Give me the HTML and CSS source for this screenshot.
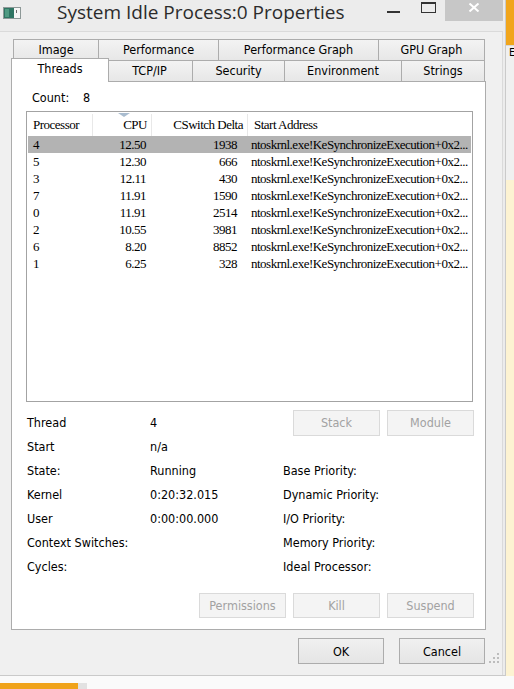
FILE: index.html
```html
<!DOCTYPE html>
<html lang="en">
<head>
    <meta charset="UTF-8">
    <meta name="viewport" content="width=device-width, initial-scale=1.0">
    <title>System Idle Process:0 Properties</title>
    <link rel="stylesheet" href="styles.css">
</head>
<body>
    <div class="screen">
        <div class="desk">
            <div class="window">
                <div class="titlebar">
                    <svg class="app-icon" width="18" height="12" viewBox="0 0 18 12">
                        <rect x="0.5" y="0.5" width="17" height="11" fill="#f6f6f6" stroke="#8d9897"/>
                        <rect x="1" y="1" width="10" height="10" fill="#2f7563"/>
                        <rect x="2" y="2" width="4" height="8" fill="#4f9a82"/>
                        <rect x="13" y="3" width="1" height="3" fill="#6b6b6b"/>
                    </svg>
                    <span class="title">System Idle Process:0 Properties</span>
                    <span class="cap-min"></span>
                    <span class="cap-max"></span>
                    <span class="cap-close">
                        <svg width="12" height="9" viewBox="0 0 12 9">
                            <path d="M1.5 0.5 L10.5 8.5 M10.5 0.5 L1.5 8.5" stroke="#fff" stroke-width="2"/>
                        </svg>
                    </span>
                </div>

                <div class="client">
                    <div class="tabs tabs-back">
                        <div class="tab">Image</div>
                        <div class="tab">Performance</div>
                        <div class="tab">Performance Graph</div>
                        <div class="tab">GPU Graph</div>
                    </div>
                    <div class="tabs tabs-front">
                        <div class="tab active">Threads</div>
                        <div class="tab">TCP/IP</div>
                        <div class="tab">Security</div>
                        <div class="tab">Environment</div>
                        <div class="tab">Strings</div>
                    </div>

                    <div class="panel">
                        <div class="count"><span class="count-label">Count:</span>8</div>

                        <div class="list">
                            <div class="list-head">
                                <div class="cell">Processor</div>
                                <div class="cell num sorted">CPU<span class="sort-arrow"></span></div>
                                <div class="cell num">CSwitch Delta</div>
                                <div class="cell addr">Start Address</div>
                            </div>
                            <div class="row selected">
                                <div class="cell">4</div><div class="cell num">12.50</div><div class="cell num wide">1938</div><div class="cell addr">ntoskrnl.exe!KeSynchronizeExecution+0x2...</div>
                            </div>
                            <div class="row">
                                <div class="cell">5</div><div class="cell num">12.30</div><div class="cell num wide">666</div><div class="cell addr">ntoskrnl.exe!KeSynchronizeExecution+0x2...</div>
                            </div>
                            <div class="row">
                                <div class="cell">3</div><div class="cell num">12.11</div><div class="cell num wide">430</div><div class="cell addr">ntoskrnl.exe!KeSynchronizeExecution+0x2...</div>
                            </div>
                            <div class="row">
                                <div class="cell">7</div><div class="cell num">11.91</div><div class="cell num wide">1590</div><div class="cell addr">ntoskrnl.exe!KeSynchronizeExecution+0x2...</div>
                            </div>
                            <div class="row">
                                <div class="cell">0</div><div class="cell num">11.91</div><div class="cell num wide">2514</div><div class="cell addr">ntoskrnl.exe!KeSynchronizeExecution+0x2...</div>
                            </div>
                            <div class="row">
                                <div class="cell">2</div><div class="cell num">10.55</div><div class="cell num wide">3981</div><div class="cell addr">ntoskrnl.exe!KeSynchronizeExecution+0x2...</div>
                            </div>
                            <div class="row">
                                <div class="cell">6</div><div class="cell num">8.20</div><div class="cell num wide">8852</div><div class="cell addr">ntoskrnl.exe!KeSynchronizeExecution+0x2...</div>
                            </div>
                            <div class="row">
                                <div class="cell">1</div><div class="cell num">6.25</div><div class="cell num wide">328</div><div class="cell addr">ntoskrnl.exe!KeSynchronizeExecution+0x2...</div>
                            </div>
                        </div>

                        <div class="details">
                            <div>Thread</div><div>4</div>
                            <div class="thread-buttons">
                                <button class="btn" disabled>Stack</button>
                                <button class="btn" disabled>Module</button>
                            </div>
                            <div>Start</div><div>n/a</div><div></div>
                            <div>State:</div><div>Running</div><div>Base Priority:</div>
                            <div>Kernel</div><div>0:20:32.015</div><div>Dynamic Priority:</div>
                            <div>User</div><div>0:00:00.000</div><div>I/O Priority:</div>
                            <div>Context Switches:</div><div></div><div>Memory Priority:</div>
                            <div>Cycles:</div><div></div><div>Ideal Processor:</div>
                        </div>

                        <div class="actions">
                            <button class="btn" disabled>Permissions</button>
                            <button class="btn" disabled>Kill</button>
                            <button class="btn" disabled>Suspend</button>
                        </div>
                    </div>

                    <div class="dialog-actions">
                        <button class="btn">OK</button>
                        <button class="btn">Cancel</button>
                        <svg class="grip" width="12" height="12" viewBox="0 0 12 12">
                            <rect x="9" y="1" width="2" height="2" fill="#bdbdbd"/>
                            <rect x="5" y="5" width="2" height="2" fill="#bdbdbd"/>
                            <rect x="9" y="5" width="2" height="2" fill="#bdbdbd"/>
                            <rect x="1" y="9" width="2" height="2" fill="#bdbdbd"/>
                            <rect x="5" y="9" width="2" height="2" fill="#bdbdbd"/>
                            <rect x="9" y="9" width="2" height="2" fill="#bdbdbd"/>
                        </svg>
                    </div>
                </div>
            </div>

            <div class="backdrop">
                <div class="bd-accent"></div>
                <div class="bd-pane">E</div>
                <div class="bd-note"></div>
            </div>
        </div>

        <div class="taskbar">
            <div class="tb-active"></div>
            <div class="tb-gap"></div>
        </div>
    </div>
</body>
</html>
```

FILE: styles.css
```css
body {
    margin: 0;
    background: #fff;
    font-family: "DejaVu Sans Condensed", "DejaVu Sans", sans-serif;
    font-size: 12.5px;
    color: #000;
}
.screen {
    width: 514px;
    height: 689px;
    overflow: hidden;
}
.desk {
    display: flex;
    height: 676px;
}

/* window frame */
.window {
    width: 506px;
    height: 676px;
    flex: none;
    box-sizing: border-box;
    display: flex;
    flex-direction: column;
    background: #ececec;
    border-right: 1px solid #cacaca;
    border-bottom: 1px solid #cacaca;
}
.titlebar {
    height: 31px;
    flex: none;
    display: flex;
    align-items: flex-start;
    padding-right: 2px;
}
.app-icon {
    margin: 7px 0 0 3px;
}
.title {
    margin-left: 36px;
    font-family: "Open Sans", sans-serif;
    font-size: 19px;
    line-height: 24px;
    color: #2b2b2b;
    white-space: nowrap;
}
.cap-min {
    width: 13px;
    height: 2px;
    margin: 11px 0 0 auto;
    background: #333;
}
.cap-max {
    width: 15px;
    height: 11px;
    box-sizing: border-box;
    margin: 2px 0 0 21px;
    border: 1px solid #333;
    border-top-width: 2px;
}
.cap-close {
    width: 58px;
    height: 21px;
    margin-left: 9px;
    background: #c7c7c7;
    display: flex;
    justify-content: center;
    padding-top: 3px;
    box-sizing: border-box;
}

.client {
    flex: 1;
    margin-right: 2px;
    padding-top: 7px;
    background: #f0f0f0;
    border-top: 1px solid #dadada;
    border-right: 1px solid #dadada;
}

/* tab strip */
.tabs {
    display: flex;
    width: 472px;
    height: 21px;
    margin-left: 13px;
}
.tab {
    box-sizing: border-box;
    height: 21px;
    border-top: 1px solid #acacac;
    border-left: 1px solid #acacac;
    background: linear-gradient(#f3f3f3, #e7e7e7);
    text-align: center;
    line-height: 20px;
    white-space: nowrap;
}
.tab:last-child {
    border-right: 1px solid #acacac;
}
.tabs-back .tab:nth-child(1) { width: 85px; }
.tabs-back .tab:nth-child(2) { width: 120px; }
.tabs-back .tab:nth-child(3) { width: 160px; }
.tabs-back .tab:nth-child(4) { width: 107px; }
.tabs-front .tab:nth-child(2) { width: 86px; }
.tabs-front .tab:nth-child(3) { width: 92px; }
.tabs-front .tab:nth-child(4) { width: 117px; }
.tabs-front .tab:nth-child(5) { width: 84px; }
.tab.active {
    position: relative;
    z-index: 1;
    width: 98px;
    height: 24px;
    margin: -2px -3px 0 -2px;
    background: #fff;
    border: 1px solid #acacac;
    border-bottom: none;
}

.panel {
    width: 475px;
    height: 549px;
    box-sizing: border-box;
    margin-left: 11px;
    background: #fff;
    border: 1px solid #acacac;
}
.count {
    padding: 8px 0 0 20px;
    line-height: 16px;
}
.count-label {
    display: inline-block;
    width: 51px;
}

/* thread list */
.list {
    width: 447px;
    height: 291px;
    box-sizing: border-box;
    margin: 5px 0 0 14px;
    border: 1px solid #a3a3a3;
    font-family: "Liberation Serif", serif;
    font-size: 13px;
    letter-spacing: -0.5px;
}
.list-head,
.row {
    display: grid;
    grid-template-columns: 66px 59px 96px 1fr;
    white-space: nowrap;
}
.list-head {
    height: 24px;
    padding-top: 2px;
    box-sizing: border-box;
    line-height: 22px;
}
.list-head .cell {
    position: relative;
    border-right: 1px solid #e8e8e8;
    padding-left: 6px;
}
.list-head .cell.num {
    padding: 0 4px 0 0;
    text-align: right;
}
.list-head .cell.addr {
    border-right: none;
}
.sort-arrow {
    position: absolute;
    left: 25px;
    top: -1px;
    width: 0;
    height: 0;
    border-left: 6px solid transparent;
    border-right: 6px solid transparent;
    border-top: 4px solid #a9bccf;
}
.row {
    height: 17px;
    line-height: 17px;
}
.row .cell {
    padding-left: 6px;
    overflow: hidden;
}
.row .cell.num {
    padding: 0 6px 0 0;
    text-align: right;
}
.row .cell.wide {
    padding-right: 11px;
}
.row .cell.addr {
    padding-left: 3px;
}
.row.selected {
    background: #b3b3b3;
    box-shadow: inset 1px 0 #fff, inset -1px 0 #fff;
}

/* thread details */
.details {
    display: grid;
    grid-template-columns: 123px 133px 191px;
    grid-auto-rows: 24px;
    margin: 9px 0 0 15px;
    line-height: 24px;
    white-space: nowrap;
}
.thread-buttons {
    display: flex;
    justify-content: flex-end;
    gap: 7px;
}
.thread-buttons .btn {
    height: 26px;
    margin-top: -1px;
}

.btn {
    width: 87px;
    height: 25px;
    box-sizing: border-box;
    padding: 0;
    border: 1px solid #acacac;
    background: linear-gradient(#f0f0f0, #e5e5e5);
    font: inherit;
    color: #000;
}
.btn:disabled {
    border-color: #dadada;
    background: #f4f4f4;
    color: #a2a2a2;
}
.actions {
    display: flex;
    justify-content: flex-end;
    gap: 7px;
    margin-top: 14px;
    padding-right: 11px;
}
.dialog-actions {
    display: flex;
    justify-content: flex-end;
    gap: 15px;
    margin-top: 8px;
    padding-right: 2px;
}
.dialog-actions .btn {
    width: 86px;
    height: 26px;
}
.grip {
    margin: 14px 0 0 -12px;
}

/* what shows of the desktop behind */
.backdrop {
    flex: 1;
    display: flex;
    flex-direction: column;
}
.bd-accent {
    height: 45px;
    flex: none;
    background: #f1a51b;
}
.bd-pane {
    height: 135px;
    flex: none;
    box-sizing: border-box;
    padding-left: 3px;
    background: #f0f0f0;
    border-top: 1px solid #d7d7d7;
    font-size: 11px;
    line-height: 14px;
    overflow: hidden;
}
.bd-note {
    flex: 1;
    background: #fdf3d2;
}
.taskbar {
    display: flex;
    height: 13px;
    background: #fafafa;
}
.tb-active {
    width: 78px;
    height: 6px;
    margin-top: 7px;
    background: #f0a31a;
}
.tb-gap {
    width: 9px;
    height: 6px;
    margin-top: 7px;
    background: #e2e2e2;
}
```
